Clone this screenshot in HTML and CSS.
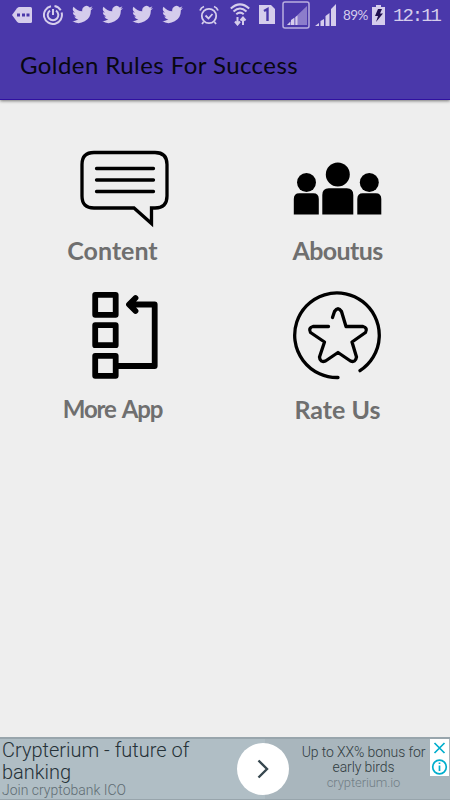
FILE: index.html
```html
<!DOCTYPE html>
<html lang="en">
<head>
  <meta charset="UTF-8">
  <title>Golden Rules For Success</title>
  <link rel="stylesheet" href="styles.css">
</head>
<body>

  <svg width="0" height="0" class="symbols">
    <symbol id="bird" viewBox="0 0 24 24">
      <path d="M24 4.6a10 10 0 0 1-2.8.8 5 5 0 0 0 2.1-2.7 10 10 0 0 1-3.1 1.2 4.9 4.9 0 0 0-8.4 4.5A14 14 0 0 1 1.700 3.200a4.900 4.900 0 0 0 1.500 6.500 5 5 0 0 1-2.200-.6 4.900 4.900 0 0 0 3.900 4.900 5 5 0 0 1-2.200.1 4.900 4.900 0 0 0 4.600 3.400A10 10 0 0 1 0 19.500a14 14 0 0 0 21.500-12.400A10 10 0 0 0 24 4.600z"/>
    </symbol>
  </svg>

  <header>
    <div class="status-bar">
      <div class="notifications">
        <svg width="20" height="16" viewBox="0 0 20 16">
          <path d="M0 8L5 1.2Q6 0 7.5 0H18.500Q20 0 20 1.500V14.500Q20 16 18.500 16H7.500Q6 16 5 14.800Z"/>
          <path class="cut" d="M5 6.500h3v3H5zM10 6.500h3v3h-3zM14.500 6.500h3v3h-3z"/>
        </svg>
        <svg class="line" width="20" height="20" viewBox="0 0 20 20" stroke-width="2">
          <path d="M8 1.200A9 9 0 1 0 18.600 7.500M11.500 1.100A9 9 0 0 1 17.700 5.300M7 5.600A5.300 5.300 0 1 0 13 5.600M10 4v6"/>
        </svg>
        <svg width="21" height="21"><use href="#bird"/></svg>
        <svg width="21" height="21"><use href="#bird"/></svg>
        <svg width="21" height="21"><use href="#bird"/></svg>
        <svg width="21" height="21"><use href="#bird"/></svg>
      </div>
      <div class="system">
        <svg class="line" width="20" height="20" viewBox="0 0 20 20" stroke-width="1.800">
          <circle cx="10" cy="11" r="7.200"/>
          <path d="M6.500 10.500l3 3 4-4.500M1 5.500Q2 2.500 5 1.500M15 1.500Q18 2.500 19 5.500M4.500 17L3 19M15.500 17l1.500 2"/>
        </svg>
        <svg class="line wifi" width="20" height="23" viewBox="0 0 20 23" stroke-width="2">
          <path d="M.8 5.500Q10-2.800 19.200 5.500M3.500 8.500Q10 2.600 16.500 8.500M6.300 11.300Q10 8 13.700 11.300"/>
          <path d="M7.500 14v7M5 18.500L7.500 21.500L10 18.500M13 22v-7M10.500 17.500L13 14.500l2.500 3"/>
        </svg>
        <svg class="sim" width="16" height="19" viewBox="0 0 16 19">
          <path d="M0 0H12L16 4V19H0Z"/>
          <path class="cut-line" d="M5 6L8.500 4v12"/>
        </svg>
        <svg class="roaming" width="28" height="28" viewBox="0 0 28 28">
          <rect class="frame" x="1" y="1" width="26" height="26" rx="2"/>
          <path class="dim" d="M5 24L25 5V24Z"/>
          <path d="M5 24l3-3v3zM9 24v-5l3-2v7zM13.500 24v-8l2-1.500V24z"/>
        </svg>
        <svg class="signal" width="22" height="22" viewBox="0 0 22 22">
          <path d="M0 22l4-3v3zM5.500 22v-5l3.500-2v7zM10.500 22V12l4-3v13zM16 22V5l5-5v22z"/>
        </svg>
        <span class="percent">89%</span>
        <svg class="battery" width="13" height="20" viewBox="0 0 13 20">
          <path d="M0 2H4V0H9V2H13V20H0Z"/>
          <path class="bolt" d="M6 4h4L8 8.500h3L4 17l2-6H3z"/>
        </svg>
        <span class="clock">12:11</span>
      </div>
    </div>
    <h1>Golden Rules For Success</h1>
  </header>

  <main>
    <div class="menu-item content">
      <svg class="icon" width="90" height="90" viewBox="0 0 90 90" stroke-width="3.300">
        <path d="M14 8.500H75Q87 8.500 87 20.500V52Q87 64 75 64H71.500V79.500L54 64H14Q2 64 2 52V20.500Q2 8.500 14 8.500Z"/>
        <path stroke-linecap="round" d="M16.500 24.500h57M16.500 36h57M16.500 47.500h57"/>
      </svg>
      <span>Content</span>
    </div>
    <div class="menu-item about">
      <svg width="90" height="90" viewBox="0 0 90 90">
        <circle cx="13.500" cy="38.500" r="9.500"/>
        <circle cx="44.800" cy="30.500" r="12"/>
        <circle cx="76.300" cy="38.500" r="9.500"/>
        <path d="M.8 70.500V55Q.8 49.300 6.300 49.300H20.300Q25.800 49.300 25.800 55V70.500ZM29.300 70.500V51Q29.300 44.300 35.800 44.300H53.800Q60.300 44.300 60.300 51V70.500ZM64.300 70.500V55Q64.300 49.300 69.800 49.300H82.800Q88.300 49.300 88.300 55V70.500Z"/>
      </svg>
      <span>Aboutus</span>
    </div>
    <div class="menu-item more">
      <svg class="icon" width="90" height="90" viewBox="0 0 90 90" stroke-width="5.800" stroke-linejoin="round">
        <path d="M15.200 4.800h20.500v20H15.200zM15.200 35.200h20.500v20H15.200zM15.200 65.800h20.500v20H15.200z"/>
        <path stroke-linecap="round" d="M36 76H74.700V14.500H50M55.500 8L49 14.500l6.500 6.500"/>
      </svg>
      <span>More App</span>
    </div>
    <div class="menu-item rate">
      <svg class="icon" width="90" height="90" viewBox="0 0 90 90" stroke-width="3.300" stroke-linecap="round" stroke-linejoin="round">
        <path d="M45 87.500A42.300 42.300 0 1 1 67 80.700"/>
        <path d="M39.500 27.500L41.500 21.500Q45 16 48.500 21.500L53 36.500H70Q75 38 72.500 42.500L59 52L63.500 67Q62.500 73 57.500 71L45 62.500L32.500 71Q27 73 26.500 67L31.500 52L17.500 42.500Q15 38 20 36.500H35.500"/>
      </svg>
      <span>Rate Us</span>
    </div>
  </main>

  <footer>
    <div class="ad-left">
      <p class="ad-title">Crypterium - future of<br>banking</p>
      <p class="ad-sub">Join cryptobank ICO</p>
    </div>
    <div class="ad-right">
      <p>Up to XX% bonus for<br>early birds</p>
      <p class="ad-link">crypterium.io</p>
    </div>
    <div class="ad-arrow">
      <svg width="14" height="20" viewBox="0 0 14 20">
        <path d="M2.500 1.500L11 10l-8.500 8.500"/>
      </svg>
    </div>
    <div class="ad-choices">
      <svg width="19" height="37" viewBox="0 0 19 37">
        <path d="M4.500 4l10 10M14.500 4l-10 10"/>
        <circle cx="9.500" cy="28" r="6.800"/>
        <path d="M9.500 26.500v5.500M9.500 23.500v1.500"/>
      </svg>
    </div>
  </footer>

</body>
</html>
```

FILE: styles.css
```css
* {
  box-sizing: border-box;
}
body {
  margin: 0;
  height: 800px;
  display: flex;
  flex-direction: column;
  background-color: #eeeeee;
  font-family: Lato, sans-serif;
  overflow: hidden;
}
h1, p {
  margin: 0;
  font-weight: normal;
}
svg {
  display: block;
  flex: none;
}
.symbols {
  position: absolute;
}
header {
  height: 100px;
  flex: none;
  background-color: #4a38aa;
  border-bottom: 1px solid #3010a0;
  box-shadow: 0 1px 3px rgba(0, 0, 0, 0.5);
}
.status-bar {
  height: 31px;
  padding: 0 10px 0 12px;
  display: flex;
  justify-content: space-between;
  align-items: center;
  color: #d5cdec;
  fill: #d5cdec;
}
.notifications {
  display: flex;
  align-items: center;
  gap: 9px;
  margin-top: -2px;
}
.notifications svg:first-child {
  margin-right: 2px;
}
.system {
  display: flex;
  align-items: center;
  width: 241px;
  margin-top: -2px;
}
.line {
  fill: none;
  stroke: #d5cdec;
}
.cut {
  fill: #4a38aa;
}
.cut-line {
  fill: none;
  stroke: #4a38aa;
  stroke-width: 2.4;
}
.wifi {
  margin-left: 11px;
}
.sim {
  margin-left: 9px;
}
.roaming {
  margin-left: 7px;
}
.frame {
  fill: none;
  stroke: #b9aee0;
  stroke-width: 1.5;
}
.dim {
  fill: #8c7dcb;
}
.signal {
  margin-left: 5px;
}
.percent {
  width: 25px;
  margin-left: 6px;
  font-size: 13.5px;
  letter-spacing: -0.6px;
  white-space: nowrap;
}
.battery {
  margin-left: 4px;
}
.bolt {
  fill: #20104f;
}
.clock {
  margin: 2px 0 0 8px;
  font-family: "Liberation Mono", monospace;
  font-size: 19px;
  letter-spacing: -2px;
  white-space: nowrap;
}
h1 {
  padding: 18px 0 0 20px;
  font-size: 24px;
  line-height: 32px;
  letter-spacing: 0.43px;
  color: #08070f;
  white-space: nowrap;
}
main {
  flex: 1;
  padding-top: 44px;
  display: grid;
  grid-template-columns: 225px 225px;
  grid-template-rows: 146px 146px;
}
.menu-item {
  display: flex;
  flex-direction: column;
  align-items: center;
  font-size: 25px;
  font-weight: bold;
  line-height: 34px;
  color: #6f6f6f;
}
.menu-item svg {
  fill: #000;
}
.menu-item .icon {
  fill: none;
  stroke: #000;
}
.content svg, .more svg {
  margin-left: 25px;
}
.content span {
  margin-top: -1px;
}
.about span {
  margin-top: -1px;
  letter-spacing: -0.6px;
}
.more span, .rate span {
  margin-top: 12px;
}
.more span {
  font-size: 24px;
  letter-spacing: -1.1px;
  word-spacing: 2px;
}
footer {
  height: 63px;
  flex: none;
  position: relative;
  display: flex;
  border-top: 2px solid #98a5ac;
  border-bottom: 1px solid #98a5ac;
  background-color: #b0bec5;
  font-family: "Roboto Light", Roboto, sans-serif;
  font-weight: 300;
}
.ad-left {
  width: 265px;
  padding-left: 2px;
}
.ad-title {
  font-size: 20px;
  line-height: 22px;
  color: #263238;
}
.ad-sub {
  font-size: 14px;
  line-height: 14px;
  color: #5f6c73;
}
.ad-right {
  flex: 1;
  padding: 6px 14px 0 26px;
  background-color: #a9b6bd;
  text-align: center;
  font-size: 14px;
  line-height: 15px;
  letter-spacing: -0.1px;
  color: #303b40;
  white-space: nowrap;
}
.ad-link {
  font-size: 13px;
  letter-spacing: -0.1px;
  color: #727f87;
}
.ad-arrow {
  position: absolute;
  left: 237px;
  top: 4px;
  width: 52px;
  height: 52px;
  border-radius: 50%;
  background-color: #fff;
  display: flex;
  align-items: center;
  justify-content: center;
}
.ad-arrow path {
  fill: none;
  stroke: #37474f;
  stroke-width: 2.4;
}
.ad-choices {
  position: absolute;
  right: 1px;
  top: 0;
  background-color: #fff;
}
.ad-choices svg {
  fill: none;
  stroke: #00aecd;
  stroke-width: 1.7;
}
```
